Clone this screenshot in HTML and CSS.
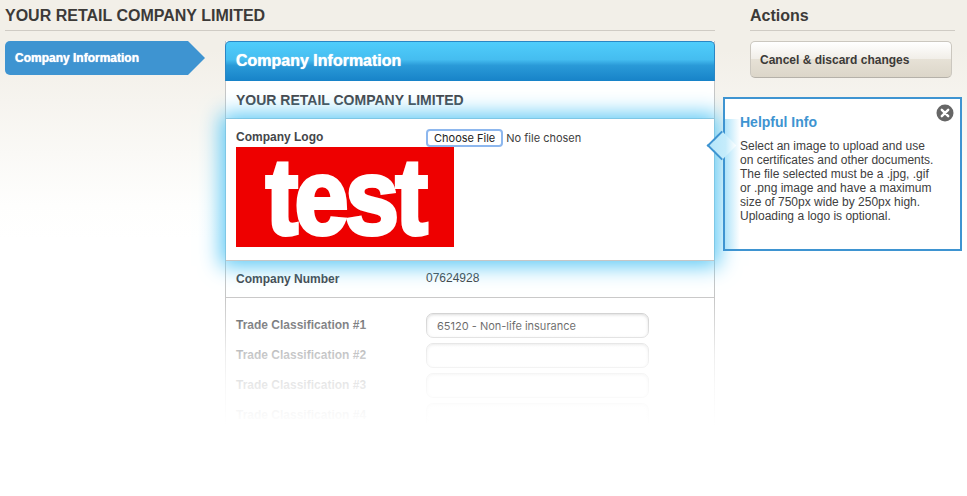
FILE: index.html
```html
<!DOCTYPE html>
<html lang="en">
<head>
<meta charset="utf-8">
<title>Company Information</title>
<link rel="stylesheet" href="styles.css">
</head>
<body>
<div class="page">
  <main class="main">
    <h1 class="page-title">YOUR RETAIL COMPANY LIMITED</h1>
    <div class="cols">
      <nav class="side-nav"><a class="side-link">Company Information</a></nav>
      <section class="panel">
        <h2 class="panel-head">Company Information</h2>
        <h3 class="panel-sub">YOUR RETAIL COMPANY LIMITED</h3>
        <div class="logo-row">
          <div class="logo-top">
            <label class="label label-up">Company Logo</label>
            <input class="file" type="file">
          </div>
          <div class="logo-box"><span class="logo-text">test</span></div>
          <aside class="tip">
            <span class="tip-arrow"></span>
            <svg class="tip-close" viewBox="0 0 18 18" width="18" height="18" aria-hidden="true">
              <circle cx="9" cy="9" r="8.5" fill="#666"/>
              <path d="M5.8 5.8l6.4 6.4M12.2 5.8l-6.4 6.4" stroke="#fff" stroke-width="2.4" stroke-linecap="round" fill="none"/>
            </svg>
            <h4 class="tip-title">Helpful Info</h4>
            <p class="tip-text">Select an image to upload and use<br>on certificates and other documents.<br>The file selected must be a .jpg, .gif<br>or .png image and have a maximum<br>size of 750px wide by 250px high.<br>Uploading a logo is optional.</p>
          </aside>
        </div>
        <div class="number-row">
          <span class="label">Company Number</span>
          <span class="value">07624928</span>
        </div>
        <div class="trades">
          <div class="trade"><label class="label label-up">Trade Classification #1</label><input class="text" type="text" value="65120 - Non-life insurance"></div>
          <div class="trade"><label class="label label-up">Trade Classification #2</label><input class="text" type="text"></div>
          <div class="trade"><label class="label label-up">Trade Classification #3</label><input class="text" type="text"></div>
          <div class="trade"><label class="label label-up">Trade Classification #4</label><input class="text" type="text"></div>
        </div>
      </section>
    </div>
  </main>
  <aside class="actions">
    <h2 class="page-title">Actions</h2>
    <button class="cancel" type="button">Cancel &amp; discard changes</button>
  </aside>
</div>
</body>
</html>
```
FILE: styles.css
```css
* { box-sizing: border-box; }
html, body { margin: 0; height: 100%; }
body {
  overflow: hidden;
  font-family: "Liberation Sans", Arial, sans-serif;
  color: #404040;
  background: linear-gradient(#f2efe8 0, #f2efe8 50px, #fefefd 205px, #ffffff 240px);
}
.page { display: flex; gap: 35px; padding-left: 5px; }
.main { width: 710px; }
.actions { width: 205px; }
.page-title {
  margin: 0;
  height: 31px;
  padding-top: 7px;
  font-size: 16px;
  line-height: 18px;
  font-weight: bold;
  color: #3c3a38;
  border-bottom: 1px solid #cfcbc4;
}
.cols { display: flex; gap: 20px; padding-top: 10px; }
.side-nav { width: 200px; flex: none; }
.side-link {
  display: block;
  position: relative;
  width: 183px;
  height: 34px;
  padding: 10px 0 0 10px;
  font-size: 12px;
  line-height: 14px;
  font-weight: bold;
  color: #fff;
  text-shadow: 0 0 1px #fff;
  background: #3e94d1;
  border-radius: 5px 0 0 5px;
}
.side-link::after {
  content: "";
  position: absolute;
  left: 100%;
  top: 0;
  border-left: 17px solid #3e94d1;
  border-top: 17px solid transparent;
  border-bottom: 17px solid transparent;
}
.panel {
  position: relative;
  width: 490px;
  flex: none;
  background: #fff;
  border-left: 1px solid #c6c6c6;
  border-right: 1px solid #c6c6c6;
}
.panel::after {
  content: "";
  position: absolute;
  left: -1px;
  right: -1px;
  bottom: 0;
  height: 131px;
  background: linear-gradient(rgba(255,255,255,0) 0, rgba(255,255,255,.33) 21%, rgba(255,255,255,.7) 44%, rgba(255,255,255,.88) 67%, rgba(255,255,255,.97) 90%, #fff 98%);
  pointer-events: none;
}
.panel-head {
  margin: 0 -1px;
  height: 40px;
  padding: 9px 0 0 10px;
  font-size: 16px;
  line-height: 19px;
  font-weight: bold;
  color: #fff;
  text-shadow: 0 0 1px #fff;
  background: linear-gradient(#4fcdfb 0, #45bdf0 45%, #2a9ad8 60%, #1783c8 100%);
  border: 1px solid #2a86c4;
  border-bottom: 0;
  border-radius: 5px 5px 0 0;
}
.panel-sub {
  margin: 0;
  height: 38px;
  padding: 11px 0 0 10px;
  font-size: 14px;
  line-height: 16px;
  font-weight: bold;
  color: #44464a;
  background: #fff;
  border-bottom: 1px solid #c6c6c6;
}
.logo-row {
  position: relative;
  z-index: 1;
  height: 142px;
  padding: 10px 10px 0;
  background: #fff;
  box-shadow: 0 0 20px 5px #5ac8f5;
  border-bottom: 1px solid #c6c6c6;
}
.logo-top { display: flex; align-items: center; height: 18px; }
.label {
  display: block;
  width: 190px;
  flex: none;
  font-size: 12px;
  line-height: 14px;
  font-weight: bold;
  color: #44464a;
}
.label-up { margin-bottom: 2px; }
.file {
  font-family: Inter, Roboto, sans-serif;
  font-size: 11px;
  color: #404040;
  width: 220px;
}
.file::file-selector-button {
  font: inherit;
  color: #222;
  background: #fff;
  height: 18px;
  padding: 0 6px;
  margin-right: 3px;
  border: 2px solid #8db7ee;
  border-radius: 4px;
}
.logo-box {
  width: 218px;
  height: 100px;
  background: #ee0000;
  text-align: center;
}
.logo-text {
  display: inline-block;
  font-size: 108px;
  line-height: 100px;
  font-weight: bold;
  letter-spacing: -4px;
  color: #fff;
  -webkit-text-stroke: 4px #fff;
  transform: scaleX(.9);
}
.tip {
  position: absolute;
  left: 497px;
  top: -22px;
  width: 239px;
  height: 154px;
  padding: 15px 15px 0 15px;
  background: linear-gradient(to right, rgba(110,205,245,.55), rgba(110,205,245,0) 15px) 0 20px / 100% 100% no-repeat, #fff;
  border: 2px solid #3e94d1;
}
.tip-arrow {
  position: absolute;
  left: -14px;
  top: 36px;
  width: 21px;
  height: 21px;
  background: linear-gradient(to top right, #b5e6fa 0, #c5ecfb 60%, #ffffff 100%);
  border-left: 2px solid #3e94d1;
  border-bottom: 2px solid #3e94d1;
  transform: rotate(45deg);
}
.tip-close { position: absolute; right: 6px; top: 5px; }
.tip-title {
  margin: 0 0 9px;
  font-size: 14px;
  line-height: 16px;
  font-weight: bold;
  color: #3e94d1;
}
.tip-text {
  position: relative;
  margin: 0;
  font-size: 12px;
  line-height: 14px;
  color: #404040;
}
.number-row {
  display: flex;
  height: 37px;
  padding: 11px 10px 0;
  border-bottom: 1px solid #c9c9c9;
}
.value { margin-top: -1px; font-size: 12px; line-height: 14px; color: #404040; }
.trades { height: 130px; overflow: hidden; padding: 15px 10px 0; }
.trade { display: flex; align-items: center; height: 25px; margin-bottom: 5px; }
.text {
  width: 223px;
  height: 25px;
  padding: 0 10px;
  font-family: Inter, Roboto, sans-serif;
  font-size: 11px;
  color: #222;
  background: #fff;
  border: 1px solid #c8c8c8;
  border-radius: 7px;
  box-shadow: inset 0 1px 3px rgba(0,0,0,.18);
}
.cancel {
  display: block;
  width: 202px;
  height: 37px;
  margin: 10px 0 0 0;
  padding: 0 0 0 9px;
  text-align: left;
  font-family: inherit;
  font-size: 12px;
  font-weight: bold;
  color: #3c3a38;
  background: linear-gradient(#fff 0, #f1eee8 48%, #e6e1d6 50%, #dcd6c9 100%);
  border: 1px solid #cbc7bf;
  border-bottom-color: #b5b1a9;
  border-radius: 5px;
}
```
